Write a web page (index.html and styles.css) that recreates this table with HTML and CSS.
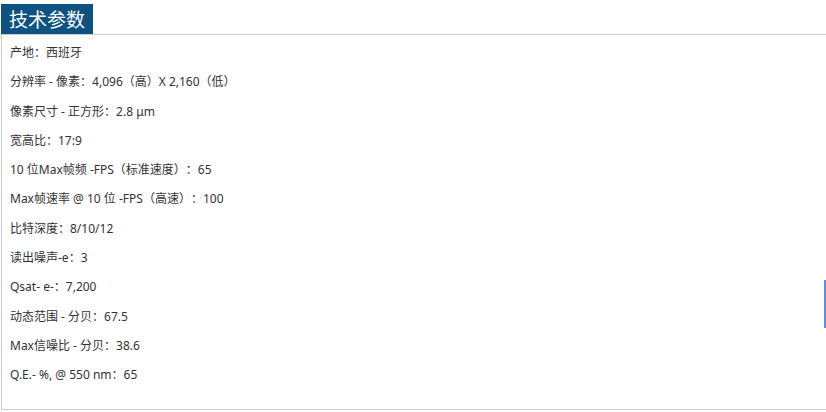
FILE: index.html
```html
<!DOCTYPE html>
<html lang="zh-CN">
<head>
<meta charset="utf-8">
<title>技术参数</title>
<link rel="stylesheet" href="styles.css">
</head>
<body>
<section class="panel">
  <div class="tabbar"><h2 class="tab">技术参数</h2></div>
  <div class="content">
    <ul class="specs">
      <li>产地：西班牙</li>
      <li>分辨率 - 像素：4,096（高）X 2,160（低）</li>
      <li>像素尺寸 - 正方形：2.8 μm</li>
      <li>宽高比：17:9</li>
      <li>10 位Max帧频 -FPS（标准速度）：65</li>
      <li>Max帧速率 @ 10 位 -FPS（高速）：100</li>
      <li>比特深度：8/10/12</li>
      <li>读出噪声-e：3</li>
      <li>Qsat- e-：7,200</li>
      <li>动态范围 - 分贝：67.5</li>
      <li>Max信噪比 - 分贝：38.6</li>
      <li>Q.E.- %, @ 550 nm：65</li>
    </ul>
    <div class="scroll-indicator"></div>
  </div>
</section>
</body>
</html>
```
FILE: styles.css
```css
html, body {
  margin: 0;
  padding: 0;
  background: #ffffff;
}
body {
  font-family: "Noto Sans", "Noto Sans CJK SC", sans-serif;
  color: #333333;
  text-spacing-trim: space-all;
}
.panel {
  padding-top: 4px;
  width: 826px;
}
.tabbar {
  display: flex;
  border-bottom: 1px solid #cccccc;
}
.tab {
  margin: 0 0 0 1px;
  background: #0e5282;
  color: #ffffff;
  font-family: "Noto Sans CJK SC", sans-serif;
  font-weight: normal;
  font-size: 19px;
  line-height: 29px;
  height: 30px;
  padding: 0 8px 0 8px;
}
.content {
  position: relative;
  border-left: 1px solid #cccccc;
  border-bottom: 1px solid #cccccc;
  margin-left: 1px;
  height: 374px;
}
.specs {
  list-style: none;
  margin: 0;
  padding: 3px 0 0 8px;
  font-size: 12px;
}
.specs li {
  line-height: 29.3px;
  height: 29.3px;
}
.scroll-indicator {
  position: absolute;
  right: 0;
  top: 245px;
  width: 2px;
  height: 48px;
  background: #5b8def;
}
```
